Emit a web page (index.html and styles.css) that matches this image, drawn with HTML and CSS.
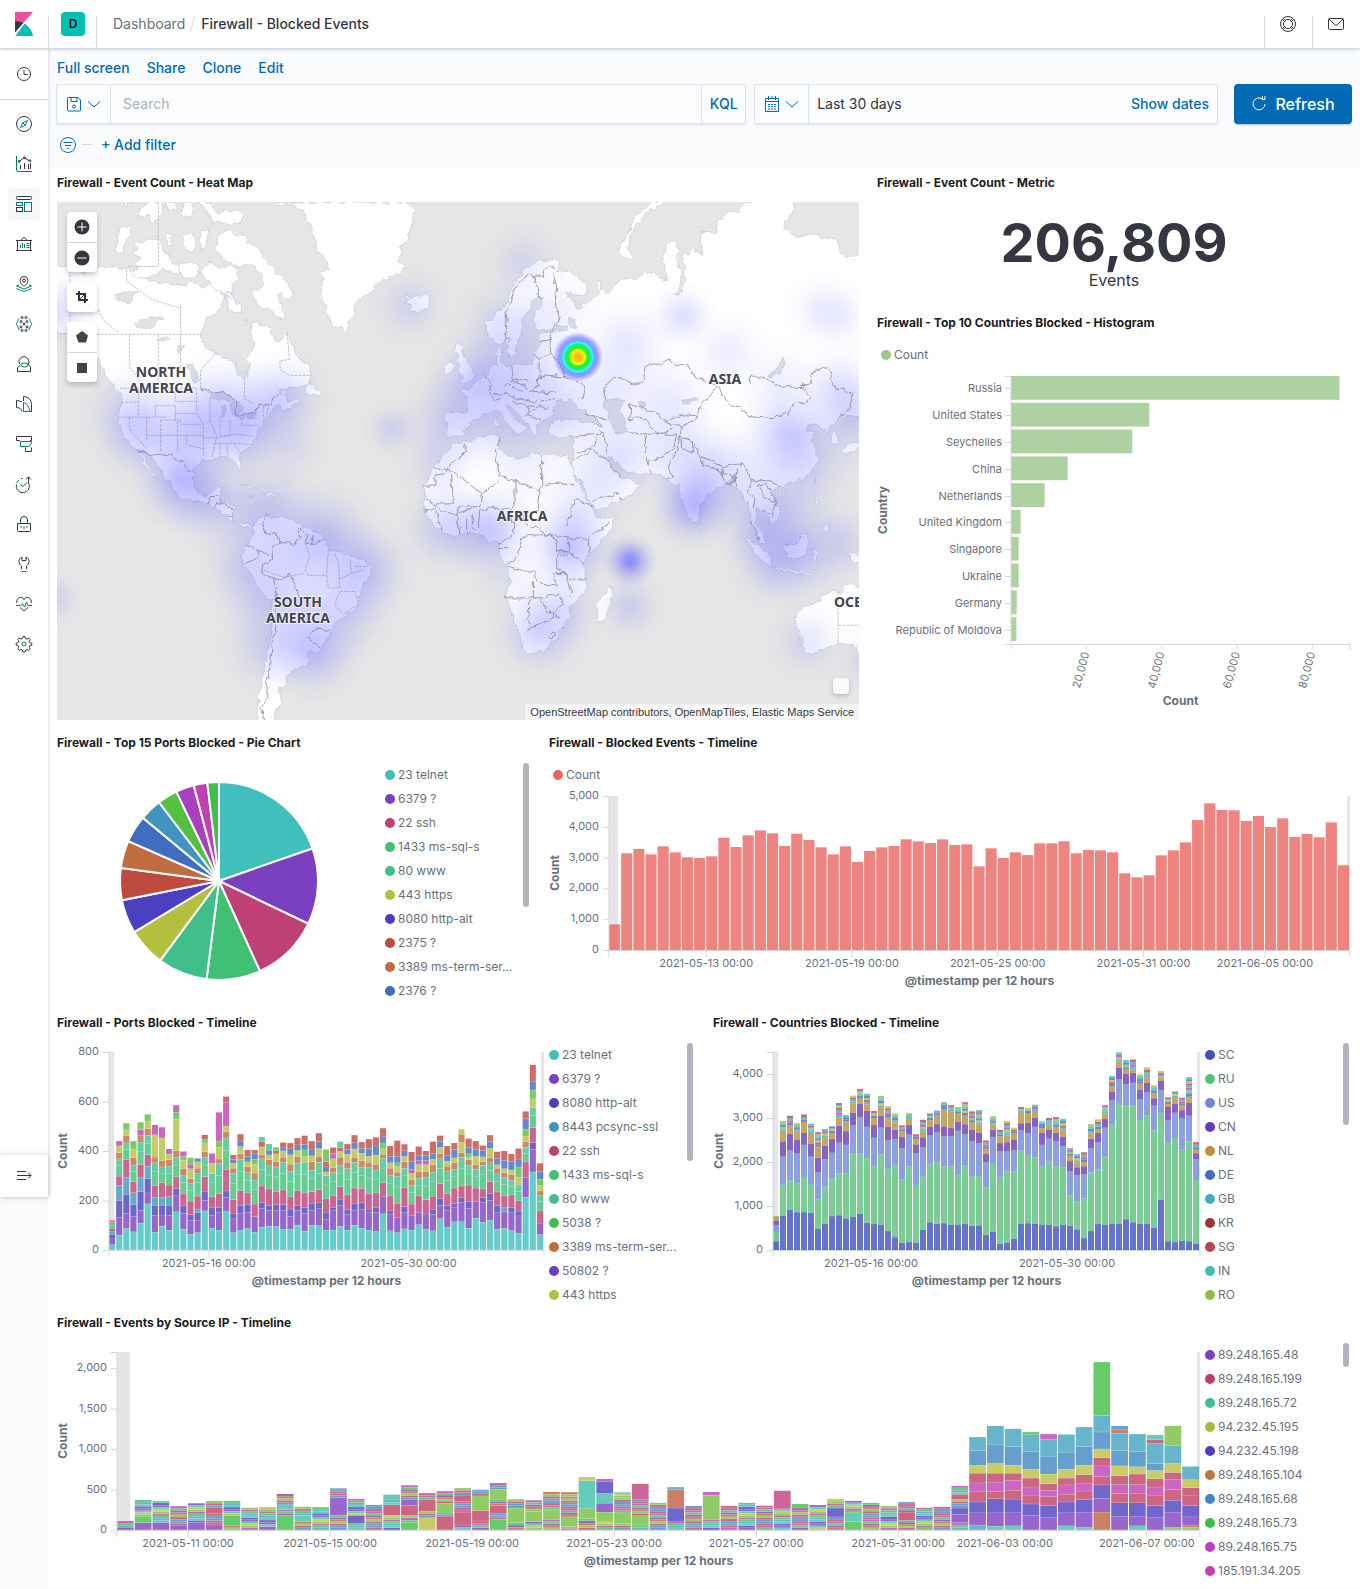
FILE: index.html
```html
<!DOCTYPE html>
<html lang="en">
<head>
    <meta charset="UTF-8">
    <meta name="viewport" content="width=device-width, initial-scale=1.0">
    <title>Firewall - Blocked Events</title>
    <link rel="stylesheet" href="styles.css">
</head>
<body>

<header class="header">
    <a class="header-logo" href="#" aria-label="Home">
        <svg width="24" height="24" viewBox="0 0 24 24">
            <path fill="#f04e98" d="M3 0v10.5L10.5 12 21 0z"/>
            <path fill="#343741" d="M3 9v11.5L11.3 11C8.900 9.700 6 9 3 9z"/>
            <path fill="#00bfb3" d="M12.600 11.500L3.400 24H21c-.9-5.100-4-9.600-8.400-12.500z"/>
        </svg>
    </a>
    <button class="header-space" aria-label="Default space"><span class="avatar">D</span></button>
    <nav class="breadcrumbs">
        <a href="#">Dashboard</a>
        <span class="slash"></span>
        <span class="current">Firewall - Blocked Events</span>
    </nav>
    <button class="header-icon" aria-label="Help">
        <svg width="16" height="16" viewBox="0 0 16 16" fill="none" stroke="#343741">
            <circle cx="8" cy="8" r="7.500"/><circle cx="8" cy="8" r="4.500"/>
            <path d="M2.500 3.500l2.300 2.300M3.500 2.500l2.300 2.300M13.500 3.500l-2.300 2.300M12.500 2.500l-2.300 2.300M2.500 12.500l2.300-2.300M3.500 13.500l2.300-2.300M13.500 12.500l-2.300-2.300M12.500 13.500l-2.300-2.300"/>
        </svg>
    </button>
    <button class="header-icon" aria-label="News">
        <svg width="16" height="16" viewBox="0 0 16 16" fill="none" stroke="#343741">
            <rect x=".5" y="2.500" width="15" height="11" rx="1"/><path d="M1 3l5.800 5.800a1.700 1.700 0 0 0 2.400 0L15 3"/>
        </svg>
    </button>
</header>

<div class="layout">
    <nav class="side">
        <a class="recent" href="#" aria-label="Recently viewed">
            <svg viewBox="0 0 16 16"><circle cx="8" cy="8" r="6.500"/><path d="M8 4v4.500h3.500"/></svg>
        </a>
        <div class="side-links">
            <a href="#" aria-label="Discover"><svg viewBox="0 0 16 16"><circle cx="8" cy="8" r="7.500"/><path class="t" d="M11.500 4.500L9.300 9.300l-4.800 2.200 2.200-4.800zM6.700 6.700l2.600 2.600"/></svg></a>
            <a href="#" aria-label="Visualize"><svg viewBox="0 0 16 16"><path class="t" d="M.5 0v14a1.500 1.500 0 0 0 1.500 1.500h14"/><path d="M4.500 13V9M8.500 13V7M12.500 13V8M3 5.500l5-3.700 5.500 3M14.500 13V7"/><circle cx="3" cy="5.500" r="1"/><circle cx="8.500" cy="1.700" r="1"/><circle cx="14" cy="4.800" r="1"/></svg></a>
            <a class="active" href="#" aria-label="Dashboard"><svg viewBox="0 0 16 16"><rect x=".5" y=".5" width="15" height="3" rx="1"/><rect class="t" x=".5" y="6.500" width="6" height="3"/><rect class="t" x="8.500" y="6.500" width="7" height="9"/><rect x=".5" y="11.500" width="6" height="4"/></svg></a>
            <a href="#" aria-label="Canvas"><svg viewBox="0 0 16 16"><path d="M0 4.500h16M1.500 4.500v9.500M14.500 4.500v9.500M0 14.500h16M4.500 4.500L8 1.500l3.500 3"/><path class="t" d="M4.500 12V9M6.500 12V7M8.500 12V8M10.500 7.500h3M10.500 9.500h3M10.500 11.500h3"/></svg></a>
            <a href="#" aria-label="Maps"><svg viewBox="0 0 16 16"><path d="M8 10.500C5.500 8 4 6.500 4 4.500a4 4 0 0 1 8 0c0 2-1.500 3.500-4 6z"/><circle cx="8" cy="4.500" r="1.500"/><path class="t" d="M3 9l-2.500 1L8 13l7.500-3L13 9M.5 12.500l7.500 3 7.500-3"/></svg></a>
            <a href="#" aria-label="Machine Learning"><svg viewBox="0 0 16 16"><circle cx="6" cy="1.500" r="1"/><circle cx="10" cy="1.500" r="1"/><circle cx="5" cy="5.500" r="1"/><circle cx="11" cy="5.500" r="1"/><circle cx="8" cy="8" r="1"/><circle cx="5" cy="11" r="1"/><circle cx="11" cy="11" r="1"/><circle cx="6" cy="14.500" r="1"/><circle cx="10" cy="14.500" r="1"/><path class="t" d="M3 2.500C1.500 4 2 5 1 6.500S.5 9 1.500 10s.5 3 2 4M13 2.500c1.500 1.500 1 2.500 2 4s.5 2.500-.5 3.500-.5 3-2 4"/></svg></a>
            <a href="#" aria-label="Metrics"><svg viewBox="0 0 16 16"><path d="M3.500 8A5 5 0 1 1 12 8.500l2.500 2v5h-13v-4L4 9.500"/><ellipse class="t" cx="8.500" cy="9" rx="3.500" ry="2"/></svg></a>
            <a href="#" aria-label="Logs"><svg viewBox="0 0 16 16"><path d="M7.500 5V.5c4.500 0 8 3.500 8 8v7H14M6 5.500L.5 4.500v7c3 0 5 1.500 5.500 4"/><path class="t" d="M7.500 15.500h6c0-4-2-7.500-6-9z"/></svg></a>
            <a href="#" aria-label="APM"><svg viewBox="0 0 16 16"><path d="M4 4.500H.5v-4h15v4H14M9.500 11.500v4h6v-4"/><path class="t" d="M4.500 5.500h11c0 3-1.500 5-4.500 5H4.500z"/></svg></a>
            <a href="#" aria-label="Uptime"><svg viewBox="0 0 16 16"><path class="t" d="M.7 7A6.500 6.500 0 0 1 7 2.500" stroke-dasharray="4 2"/><path d="M.5 8.500A6.500 6.500 0 1 0 12.500 7V1M10 3.500l2.500-2.700L15 3.500M4.500 8.500l2.500 2 4-4"/></svg></a>
            <a href="#" aria-label="SIEM"><svg viewBox="0 0 16 16"><path d="M4.500 6.500V4a3.500 3.500 0 0 1 7 0v2.500M1.500 7.500h13v7a1 1 0 0 1-1 1h-11a1 1 0 0 1-1-1z"/><path class="t" d="M5 10v2M8 10v3M11 10v2"/></svg></a>
            <a href="#" aria-label="Dev Tools"><svg viewBox="0 0 16 16"><path d="M6 1v3.500h4V1c2 1 3 2.500 3 4.500S12 9 10.500 10v3M6 1C4 2 3 3.500 3 5.500S4 9 5.500 10v3"/><path class="t" d="M5.500 15.500h5"/></svg></a>
            <a href="#" aria-label="Stack Monitoring"><svg viewBox="0 0 16 16"><path d="M1 7C0 4 2 1.500 4.500 1.500 6.500 1.500 8 3 8 4c0-1 1.500-2.500 3.500-2.500C14 1.500 16 4 15 7M4 11.500l4 3.500 4-3.500"/><path class="t" d="M0 9.500h5l1.500-2 2 3.500 2-5 1.500 3.500h4"/></svg></a>
            <a href="#" aria-label="Management"><svg viewBox="0 0 16 16"><path d="M6.500 2.500l.5-2h2l.5 2 1.500.6 1.700-1 1.500 1.500-1 1.700.6 1.500 2 .5v2l-2 .5-.6 1.500 1 1.700-1.500 1.500-1.700-1-1.500.6-.5 1.900H7l-.5-2-1.500-.6-1.700 1-1.500-1.500 1-1.700-.6-1.500-2-.5v-2l2-.5.6-1.500-1-1.700 1.500-1.500 1.700 1z"/><circle class="t" cx="8" cy="8" r="2"/></svg></a>
        </div>
        <button class="expand" aria-label="Expand side navigation">
            <svg viewBox="0 0 16 16"><path d="M1 3.500h9M1 7.500h14M1 11.500h9M12 4.500l3 3-3 3"/></svg>
        </button>
    </nav>

    <main class="main">
        <div class="toolbar">
            <div class="menu">
                <a href="#">Full screen</a>
                <a href="#">Share</a>
                <a href="#">Clone</a>
                <a href="#">Edit</a>
            </div>
            <form class="query" onsubmit="return false">
                <div class="search-box">
                    <button class="box-prepend saved" type="button" aria-label="Saved queries">
                        <svg width="16" height="16" viewBox="0 0 16 16"><path d="M1.500 2.500a1 1 0 0 1 1-1h9.500l2.500 2.500v10a1 1 0 0 1-1 1h-11a1 1 0 0 1-1-1zM5 1.500v4h6v-4"/><circle cx="8" cy="10.500" r="1.500"/></svg>
                        <svg width="16" height="16" viewBox="0 0 16 16"><path d="M2 5.500l6 5.500 6-5.500"/></svg>
                    </button>
                    <input class="search" type="text" placeholder="Search" aria-label="Search">
                    <button class="kql" type="button">KQL</button>
                </div>
                <div class="date-box">
                    <button class="box-prepend" type="button" aria-label="Date quick select">
                        <svg width="16" height="16" viewBox="0 0 16 16"><path d="M1.500 2.500h13v13h-13zM1.500 5.500h13M4.500 0v4M8 0v3M11.500 0v4"/><path d="M4 8.500h8M4 10.700h8M4 13h8" stroke-dasharray="2 1"/></svg>
                        <svg width="16" height="16" viewBox="0 0 16 16"><path d="M2 5.500l6 5.500 6-5.500"/></svg>
                    </button>
                    <button class="date-value" type="button">Last 30 days</button>
                    <button class="show-dates" type="button">Show dates</button>
                </div>
                <button class="refresh" type="submit">
                    <svg width="16" height="16" viewBox="0 0 16 16"><path d="M11.500 3A6 6 0 1 0 14 8M11.500 0v3.500H14V0"/></svg>
                    Refresh
                </button>
            </form>
            <div class="filters">
                <button class="filter-menu" aria-label="Filter options">
                    <svg width="16" height="16" viewBox="0 0 16 16"><circle cx="8" cy="8" r="7.500"/><path d="M3.500 5.500h9M5 8.500h6M7 11.500h2"/></svg>
                </button>
                <span class="filter-dash"></span>
                <button class="add-filter">+ Add filter</button>
            </div>
        </div>

        <div class="dashboard">
            <section class="panel panel-map">
                <h2>Firewall - Event Count - Heat Map</h2>
                <div class="map">
                    <svg class="map-canvas" viewBox="0 0 802 518" preserveAspectRatio="xMidYMid slice">
                        <defs>
                            <radialGradient id="blob">
                                <stop offset="0" stop-color="#6464ff" stop-opacity=".7"/>
                                <stop offset=".2" stop-color="#6464ff" stop-opacity=".6"/>
                                <stop offset=".5" stop-color="#6464ff" stop-opacity=".3"/>
                                <stop offset=".75" stop-color="#6464ff" stop-opacity=".1"/>
                                <stop offset="1" stop-color="#6464ff" stop-opacity="0"/>
                            </radialGradient>
                            <radialGradient id="hot">
                                <stop offset="0" stop-color="#ffa51e"/>
                                <stop offset=".16" stop-color="#ffc81e"/>
                                <stop offset=".28" stop-color="#e6ff14"/>
                                <stop offset=".38" stop-color="#28f028"/>
                                <stop offset=".5" stop-color="#14f078"/>
                                <stop offset=".58" stop-color="#3cf5ff"/>
                                <stop offset=".66" stop-color="#5aa0ff" stop-opacity=".9"/>
                                <stop offset=".78" stop-color="#6464ff" stop-opacity=".6"/>
                                <stop offset="1" stop-color="#6464ff" stop-opacity="0"/>
                            </radialGradient>
                            <!-- breaks up long straight coast segments -->
                            <filter id="coast" x="0" y="0" width="1" height="1">
                                <feTurbulence type="fractalNoise" baseFrequency=".045" numOctaves="2" seed="4"/>
                                <feDisplacementMap in="SourceGraphic" scale="20" xChannelSelector="R" yChannelSelector="G"/>
                            </filter>
                        </defs>
                        <g transform="translate(-7 -32) scale(.33333 .35714)">
                            <g class="land" filter="url(#coast)">
                                <path d="M0 270L21 270 30 274 40 270 50 275 55 268 75 278 100 290 125 276 140 275 150 268 160 272 190 275 200 268 215 276 230 278 260 290 285 300 300 312 315 308 330 320 350 316 370 322 410 318 425 312 440 322 455 328 470 325 490 318 510 340 530 345 525 360 510 385 490 405 465 420 455 450 455 475 470 505 500 512 530 525 555 540 560 565 578 583 592 580 598 550 590 530 600 515 612 500 610 470 600 450 605 425 620 422 635 432 650 435 665 450 672 478 690 483 700 465 712 458 720 480 735 510 760 540 785 555 785 575 770 600 745 610 710 612 690 620 665 637 690 625 712 612 705 630 712 645 745 640 748 650 720 665 700 672 690 655 668 668 655 685 640 700 632 720 620 735 615 750 605 770 580 790 565 803 570 825 577 848 568 845 555 820 550 808 530 806 500 810 480 812 455 815 440 830 430 850 432 880 445 905 470 913 492 900 500 888 520 888 512 910 508 930 530 935 552 940 550 965 553 985 570 992 590 988 606 995 600 1003 580 1000 560 995 540 975 510 955 480 940 460 930 430 928 395 915 370 898 360 880 345 855 320 825 300 795 275 787 285 810 300 840 325 870 300 850 280 820 265 787 235 765 215 735 207 710 208 680 213 650 210 622 185 600 170 580 150 540 140 520 100 480 60 455 0 455z"/>
                                <path d="M205 157L222 162 240 160 242 180 225 205 220 230 195 225 205 190z"/>
                                <path d="M250 195L275 205 300 190 325 195 340 225 355 235 365 260 400 272 400 290 370 290 340 280 325 290 300 300 270 305 235 285 265 275 250 255 275 245 245 235 262 220z"/>
                                <path d="M220 90L245 90 230 103zM265 130L275 105 290 90 335 90 340 105 330 125 310 150 300 140 295 125zM345 90L370 90 380 110 360 120zM395 90L425 90 430 110 420 135 400 130zM440 90L480 90 490 105 500 120 530 112 560 115 578 125 578 145 540 152 505 150 490 145 465 110z"/>
                                <path d="M350 175L372 180 365 195 370 215 352 210zM395 185L430 175 435 200 425 235 405 215zM450 175L480 165 475 195 455 225 448 200zM380 265L420 258 450 270 440 300 400 300z"/>
                                <path d="M500 185L520 175 540 165 550 182 565 190 575 178 600 195 590 205 625 215 640 245 665 270 680 290 700 300 715 320 730 345 715 365 695 345 680 355 690 370 695 385 710 420 690 418 675 400 660 390 640 385 620 375 605 340 625 335 640 320 630 290 600 265 560 268 540 262 520 250 500 225z"/>
                                <path d="M530 345L545 350 555 372 570 375 578 398 550 400 535 390zM450 290L480 255 510 275 540 270 560 275 568 300 550 320 540 360 525 345 490 330zM580 420L592 422 588 430z"/>
                                <path d="M675 90L690 100 720 96 745 100 760 115 770 125 768 140 785 160 800 210 798 235 820 240 830 250 835 275 808 285 820 300 812 350 830 395 850 440 870 440 892 455 900 420 915 400 918 365 955 350 990 310 1040 295 1070 270 1040 262 1060 235 1050 210 1075 200 1070 185 1090 150 1085 130 1095 110 1085 90z"/>
                                <path d="M785 575L778 600 790 605 810 620 808 635 790 628 765 628 770 605z"/>
                                <path d="M1060 350L1075 348 1080 358 1105 355 1120 348 1135 345 1142 370 1130 388 1105 398 1075 390 1085 380 1065 368 1078 362z"/>
                                <path d="M1185 545L1205 535 1212 550 1200 570 1185 575zM1218 485L1240 490 1235 510 1250 530 1255 550 1275 570 1270 590 1235 595 1225 600 1240 580 1225 575 1230 555 1220 540 1222 515 1215 505z"/>
                                <path d="M568 878L600 882 625 895 600 892zM645 905L670 902 676 912 650 914zM596 914h12v3h-10z"/>
                                <path d="M606 995L625 975 650 965 660 975 690 972 735 980 760 1000 800 1015 825 1035 835 1065 880 1070 920 1085 950 1095 965 1115 960 1135 935 1165 930 1200 915 1235 880 1250 850 1270 845 1295 820 1325 805 1350 770 1350 768 1358 778 1370 772 1390 735 1395 730 1410 705 1420 710 1440 690 1450 690 1470 700 1490 680 1510 672 1550 625 1550 620 1500 632 1450 640 1410 655 1340 665 1280 668 1240 665 1205 630 1180 610 1150 590 1115 575 1100 580 1070 600 1040 608 1015z"/>
                                <path class="lake" d="M482 630L510 620 545 635 555 648 525 645 490 640zM515 660L530 655 525 690 513 695zM540 655L565 650 582 665 560 690 545 680zM565 695L620 678 622 685 570 700zM410 545L430 550 448 590 435 598zM250 430L275 422 300 408 310 415 338 412 320 430 300 445 260 440zM195 352L240 340 265 338 240 372 215 370zM320 478L340 468 358 472 345 480zM388 490L402 492 390 515z"/>
                            </g>
                            <path class="border dashed" d="M60 270V455M140 460H455M238 460V550L285 611M325 460V611M392 380V560M230 278V310L300 360 392 388M145 390L160 420 205 455M210 611H440M452 611V560L500 510M583 583V640L610 655M325 90V270H232M712 458L718 530 690 535 690 560 720 575H785M213 650H265M265 611V690M208 692H350M238 692V725L290 780M290 692V760M316 660H376V704M316 660V692M376 611V648H440M376 682H440M332 700V790M290 743H455M383 704V790M332 700H392V712H455M410 743V770L460 780M440 611V680L460 712V800M480 640V700L470 710M480 700L500 745 485 805M510 700V745L545 740M540 700V735M460 750H500L560 740 610 745M490 765H560L610 770M510 765V805M530 765L535 805M550 765L575 795M575 695V715H630M577 695H620M640 660V695M655 655L650 690M765 1045L780 1080 765 1120 775 1135H830L835 1060M830 1135L835 1170H870L865 1100 855 1075M870 1145L905 1130 900 1090M905 1130L935 1120M915 1110H955M860 1200L870 1180 915 1180 925 1215 880 1245 855 1220zM640 1120L700 1140 760 1130"/>
                            <path class="border" filter="url(#coast)" d="M452 611L480 622 520 625 555 645 560 690 620 680 625 660 665 658 668 637M265 787L310 797 345 795 365 800 385 820 400 815 415 840 432 848M475 935L480 915 508 912M492 945L500 930 550 950M530 965L552 968M650 967L635 990 645 1015 685 1020 690 1045 665 1055 668 1090 640 1100 635 1120 640 1135 670 1142 700 1145 715 1135 745 1170 748 1200M590 1055L625 1065 620 1085 590 1100H578M625 1065L665 1080M742 1000L750 1030 730 1050 715 1040 690 1045M750 1000L775 1020 765 1045 800 1045 825 1035M790 1020L785 1045M670 1142L678 1180 668 1205M678 1180L682 1230 676 1290 666 1330 662 1390 652 1430 650 1480 636 1505 642 1550M775 1310L810 1335M775 1310L790 1285 840 1290"/>
                        </g>
                        <g transform="translate(403 -32) scale(.33333 .35714)">
                            <g class="land" filter="url(#coast)">
                                <path d="M245 250L285 250 300 262 290 280 330 285 370 310 382 335 375 350 345 348 320 340 335 365 350 370 345 385 365 390 360 375 375 375 400 360 415 345 410 305 425 320 420 335 445 340 460 320 500 300 530 308 550 285 575 285 600 305 622 310 605 250 620 210 640 195 655 210 650 250 665 290 660 330 640 348 660 345 678 315 670 260 665 235 690 235 700 215 725 240 725 175 770 175 775 145 800 120 830 115 860 95 880 80 1000 80 1005 110 965 160 1010 185 1060 180 1090 190 1130 190 1140 230 1160 245 1220 230 1220 690 1180 690 1160 690 1140 700 1115 715 1110 735 1130 730 1135 760 1120 768 1112 740 1095 730 1080 722 1075 710 1040 715 1035 730 1065 732 1050 755 1070 785 1072 820 1050 850 1010 872 970 880 960 890 930 900 940 920 960 945 962 970 935 990 925 975 905 955 890 945 885 990 905 1015 920 1045 900 1050 885 1020 870 985 865 930 850 930 845 905 825 890 815 870 785 880 770 895 740 915 720 940 715 985 698 993 680 960 662 915 655 880 640 885 620 865 600 850 560 852 515 848 505 862 540 880 520 905 480 925 410 955 400 945 375 895 345 850 320 812 335 825 345 800 340 770 345 745 310 750 280 745 265 730 270 705 320 697 375 705 412 710 400 690 372 672 350 670 345 655 330 640 310 650 290 645 275 680 265 700 240 705 225 715 235 740 215 740 205 715 190 700 165 675 145 655 140 665 165 695 205 725 190 725 175 745 165 735 130 690 110 670 85 680 60 690 40 700 20 720 10 745 -30 745 -40 735 -45 680 20 680 25 650 0 615 30 610 45 595 75 575 85 565 100 545 115 545 105 520 115 495 125 510 120 540 150 548 200 540 220 545 218 515 240 490 235 460 280 455 300 440 260 450 230 450 220 430 225 400 245 380 250 360 235 355 215 370 210 395 185 420 185 450 165 520 150 525 135 480 115 485 85 470 80 430 110 395 140 370 160 320 190 280 225 260z"/>
                                <path d="M620 85L580 90 545 115 515 140 512 165 495 185 475 225 490 245 520 250 505 220 510 190 530 150 570 115z"/>
                                <path d="M17 760L60 748 100 742 120 750 115 780 150 800 165 810 195 805 215 790 250 795 320 800 345 850 365 895 400 950 410 972 440 975 467 972 455 1000 430 1035 385 1075 370 1100 378 1145 375 1185 330 1220 332 1255 310 1275 290 1315 250 1350 200 1353 190 1340 180 1300 155 1240 135 1195 155 1150 135 1100 115 1075 115 1040 90 1045 60 1018 0 1020 -30 1025 -75 1000 -100 965 -112 940 -105 900 -112 885 -80 835 -45 790 -20 765z"/>
                                <path d="M455 1165L460 1185 435 1265 415 1265 410 1225 425 1190zM720 985L728 1000 720 1010zM850 1018L870 1035 935 1085 935 1110 900 1090zM935 1110L1060 1130V1137L1000 1130 940 1120zM970 1050L1005 1040 1040 1010 1045 1045 1030 1085 980 1085zM1058 1065L1078 1060 1070 1080 1075 1105 1055 1090zM1065 910L1078 935 1068 940zM1090 1000L1108 988 1105 1012zM1160 1070L1200 1080V1105L1175 1095zM1062 870L1068 855 1066 885zM965 900H975L970 910zM1145 785L1165 770 1200 760V775L1160 795zM105 690H114V720H105zM155 735L175 738 172 748zM1090 1135L1110 1132 1095 1140z"/>
                                <path d="M1005 1245L1025 1225 1075 1210 1085 1190 1110 1180 1125 1180 1140 1185 1160 1160 1220 1165V1375L1180 1330 1135 1325 1090 1340 1070 1352 1030 1355 1025 1310 1008 1275z"/>
                                <path class="lake" d="M440 645L480 638 495 650 475 670 498 700 495 740 465 735 450 700 432 665zM535 645L555 655 545 670zM665 645L715 640 690 655 670 655zM970 525L975 545 950 575 920 580 950 560zM325 415L340 415 350 440 330 440zM290 435L315 435 320 455 295 455zM442 805L465 815 500 845 515 848 505 862 480 865 460 840zM135 475L155 475 150 485zM298 1065H325V1082H298z"/>
                            </g>
                            <path class="border dashed" d="M1134 1180V1325M1134 1275H1200"/>
                            <g filter="url(#coast)">
                                <path class="border" d="M135 480L140 440 135 400 150 370 165 330 185 310 210 290 220 300 250 300 255 275 270 268 290 280M280 290L290 330 285 370 300 420 275 450M215 290L235 330 240 365M240 475L270 475M270 455L272 515 305 545 310 580 345 590 375 605 370 640M220 515L240 525 272 515M235 580L270 575 310 580M155 548L160 590 215 615 235 605 238 540M75 575L95 600 90 630 105 645 125 640M100 630L140 625 170 640 225 650 285 640M140 600L175 615 225 620 285 625M135 600L160 585 200 590M160 650L200 660 210 690 240 700M200 660L265 665M195 690L230 670M432 610L460 580 500 590 520 605 550 592 555 550 600 545 620 530 650 545 680 545 710 585 740 592 775 605 735 645 720 660 715 690 680 685 650 690 620 705 600 690 550 665 512 655 510 700M432 610L440 645M510 700L540 690 600 740 640 725M610 705L660 720M775 605L805 655 840 665 860 690 930 695 990 680 1000 660 1055 640 1020 605 1040 600 1030 610 960 605 910 580 870 580 875 600M1020 605L1050 600 1060 560 1090 552 1110 565 1125 610 1180 625 1165 675 1115 710M715 690L660 720 665 780 700 790 700 760 720 805 790 830 850 820 875 870 930 870 960 885M700 760L660 745 650 790 625 830 640 860 620 865M720 805L730 825 790 850 790 835M785 835L790 875 820 880 825 855 790 850M850 820L820 860 830 890M875 870L865 900 885 920 880 950M895 885L910 915 945 930 935 970 905 950M895 885L920 880 950 940M870 985L900 1040M420 725L440 780 435 805M500 735L555 740 560 810 570 850M555 740L610 740 650 740 640 780 580 815 560 810M345 745L420 740M340 815L370 800 400 770 420 740M350 790L380 780 440 810 480 860M400 925L480 905 485 925M375 680L440 700M400 690L430 720 410 715M975 1050L1005 1050 1030 1025"/>
                                <path class="border" d="M245 795V880H345M120 750L105 780 118 860 165 870 240 900 245 880M165 870L165 925 150 950M118 870L65 905 -45 830M65 905L60 940 0 940 -10 965M-80 835H-40V850L-75 855V885H-112M-25 855L-20 935H-75L-105 925M240 900L235 950 180 980 155 990 150 950 60 950 55 1000M165 985L160 1020 115 1045M180 980L260 1020 325 1030 380 1030 445 990M345 920L320 1000M400 945L350 920M195 1025L260 1020 290 1035M195 1025L160 1100H140M140 1108L180 1120 220 1120 235 1155 290 1165 280 1130 320 1130M290 1035V1120L320 1130M290 1070L320 1065 370 1100M325 1030V1065M385 1030V1075M135 1198H240L300 1185M210 1205L205 1290M205 1280L260 1265 310 1215 300 1190M240 1200L265 1240 300 1250M330 1145H378M220 1150V1200M320 1130L335 1180 330 1195M-110 955L-75 950 -60 985 -50 1010M-75 935L-55 955 -10 965 0 1020M20 975V1020M40 965V1010M-10 965L55 940M115 1060H150M17 765L20 790 -40 830M310 1275L300 1285"/>
                                <circle class="border" cx="275" cy="1305" r="8"/>
                            </g>
                        </g>
                        <g id="heat"></g>
                        <circle cx="521" cy="155" r="25" fill="url(#hot)"/>
                        <g class="map-labels">
                            <text x="104" y="175">NORTH</text>
                            <text x="104" y="191">AMERICA</text>
                            <text x="241" y="405">SOUTH</text>
                            <text x="241" y="421">AMERICA</text>
                            <text x="465" y="319">AFRICA</text>
                            <text x="668" y="182">ASIA</text>
                            <text x="809" y="405">OCEANIA</text>
                        </g>
                    </svg>
                    <div class="map-tools">
                        <div class="tool-group">
                            <button aria-label="Zoom in"><svg width="16" height="16" viewBox="0 0 16 16"><circle cx="8" cy="8" r="7.500" fill="#343741"/><path d="M3.500 8h9M8 3.500v9" stroke="#fff"/></svg></button>
                            <button aria-label="Zoom out"><svg width="16" height="16" viewBox="0 0 16 16"><circle cx="8" cy="8" r="7.500" fill="#343741"/><path d="M3.500 8h9" stroke="#fff"/></svg></button>
                        </div>
                        <div class="tool-group">
                            <button aria-label="Fit to data"><svg width="12" height="12" viewBox="0 0 12 12" fill="none" stroke="#343741" stroke-width="2"><path d="M3 0v9h9M0 3h9v9"/><path d="M4 8l4-4" stroke-width="1"/></svg></button>
                        </div>
                        <div class="tool-group">
                            <button aria-label="Draw polygon"><svg width="12" height="12" viewBox="0 0 12 12"><path d="M6 0l6 4.500L10 11.500H2.500L0 4.500z" fill="#444"/></svg></button>
                            <button aria-label="Draw rectangle"><svg width="12" height="12" viewBox="0 0 12 12"><path d="M1 1h10v10H1z" fill="#444"/></svg></button>
                        </div>
                    </div>
                    <button class="map-legend-toggle" aria-label="Expand legend"></button>
                    <div class="attribution"><a href="#">OpenStreetMap contributors</a>, <a href="#">OpenMapTiles</a>, <a href="#">Elastic Maps Service</a></div>
                </div>
            </section>

            <section class="panel panel-metric">
                <h2>Firewall - Event Count - Metric</h2>
                <div class="metric">
                    <div class="metric-value">206,809</div>
                    <div class="metric-label">Events</div>
                </div>
            </section>

            <section class="panel panel-histogram">
                <h2>Firewall - Top 10 Countries Blocked - Histogram</h2>
                <ul class="legend legend-top" data-legend="countries"></ul>
                <div class="chart" id="histogram"></div>
            </section>

            <section class="panel panel-pie">
                <h2>Firewall - Top 15 Ports Blocked - Pie Chart</h2>
                <div class="with-legend">
                    <div class="chart" id="pie"></div>
                    <ul class="legend" data-legend="pie"></ul>
                    <div class="scroll-thumb thumb-pie"></div>
                </div>
            </section>

            <section class="panel panel-events">
                <h2>Firewall - Blocked Events - Timeline</h2>
                <ul class="legend legend-top" data-legend="events"></ul>
                <div class="chart" id="events"></div>
            </section>

            <section class="panel panel-half">
                <h2>Firewall - Ports Blocked - Timeline</h2>
                <div class="with-legend">
                    <div class="chart" id="ports"></div>
                    <ul class="legend" data-legend="ports"></ul>
                    <div class="scroll-thumb thumb-ports"></div>
                </div>
            </section>

            <section class="panel panel-half">
                <h2>Firewall - Countries Blocked - Timeline</h2>
                <div class="with-legend">
                    <div class="chart" id="countries"></div>
                    <ul class="legend" data-legend="codes"></ul>
                    <div class="scroll-thumb thumb-countries"></div>
                </div>
            </section>

            <section class="panel panel-full">
                <h2>Firewall - Events by Source IP - Timeline</h2>
                <div class="with-legend">
                    <div class="chart" id="sources"></div>
                    <ul class="legend" data-legend="sources"></ul>
                    <div class="scroll-thumb thumb-sources"></div>
                </div>
            </section>
        </div>
    </main>
</div>

<script src="script.js"></script>
</body>
</html>
```
FILE: styles.css
```css
* {
    box-sizing: border-box;
}

body {
    margin: 0;
    font-family: Inter, "Liberation Sans", sans-serif;
    font-size: 14px;
    color: #343741;
    background: #fafbfd;
}

a {
    color: #006bb4;
    text-decoration: none;
}

button {
    margin: 0;
    padding: 0;
    border: none;
    background: none;
    font-family: inherit;
    font-size: 14px;
    color: inherit;
    cursor: pointer;
}

svg {
    display: block;
}

/* header */

.header {
    position: relative;
    z-index: 2;
    display: flex;
    height: 49px;
    background: #fff;
    border-bottom: 1px solid #d3dae6;
    box-shadow: 0 2px 2px -1px rgba(152, 162, 179, 0.3), 0 1px 5px -2px rgba(152, 162, 179, 0.3);
}

.header-logo,
.header-space,
.header-icon {
    position: relative;
    display: flex;
    align-items: center;
    justify-content: center;
    width: 48px;
    height: 48px;
}

.header-space {
    padding-left: 2px;
}

.header-space::before,
.header-space::after,
.header-icon::before {
    content: "";
    position: absolute;
    top: 16px;
    bottom: 0;
    left: 0;
    width: 1px;
    background: #d3dae6;
}

.header-space::after {
    left: 48px;
}

.avatar {
    width: 24px;
    height: 24px;
    border-radius: 4px;
    background: #00bfb3;
    color: #000;
    font-size: 12px;
    font-weight: 500;
    line-height: 24px;
}

.breadcrumbs {
    flex: 1;
    display: flex;
    align-items: center;
    height: 47px;
    padding-left: 17px;
}

.breadcrumbs a {
    color: #69707d;
}

.breadcrumbs .slash {
    width: 1px;
    height: 16px;
    margin: 0 8px 0 7px;
    background: #d3dae6;
    transform: rotate(15deg);
}

.breadcrumbs .current {
    font-weight: 500;
}

/* side navigation */

.layout {
    display: flex;
    align-items: flex-start;
}

.side {
    position: relative;
    z-index: 1;
    display: flex;
    flex-direction: column;
    flex: 0 0 48px;
    height: calc(100vh - 441px);
    background: #fff;
    box-shadow: 1px 0 3px rgba(152, 162, 179, 0.35);
}

.side svg {
    width: 16px;
    height: 16px;
    fill: none;
    stroke: #343741;
    overflow: visible;
}

.side .t {
    stroke: #017d73;
}

.side a {
    display: flex;
    align-items: center;
    justify-content: center;
    height: 32px;
    border-radius: 4px;
}

.side .recent {
    height: 51px;
    border-bottom: 1px solid #d3dae6;
    border-radius: 0;
}

.side-links {
    flex: 1;
    display: flex;
    flex-direction: column;
    gap: 8px;
    padding: 8px;
}

.side a.active {
    background: #f5f7fa;
}

.expand {
    display: flex;
    align-items: center;
    justify-content: center;
    height: 42px;
    background: #fff;
    box-shadow: 0 0 6px rgba(152, 162, 179, 0.5);
}

.main {
    flex: 1;
    min-width: 0;
}

/* query bar */

.toolbar {
    padding: 8px;
    height: 119px;
}

.menu {
    display: flex;
    gap: 17px;
    padding-left: 1px;
    line-height: 22px;
    font-weight: 500;
}

.query {
    display: flex;
    gap: 8px;
    padding-top: 5px;
}

.search-box,
.date-box {
    display: flex;
    height: 40px;
    background: #fbfcfd;
    border: 1px solid #e0e4ee;
    box-shadow: 0 2px 2px -1px rgba(152, 162, 179, 0.3);
}

.search-box {
    flex: 149 1 0;
}

.date-box {
    flex: 100 1 0;
}

.toolbar svg {
    fill: none;
    stroke: #006bb4;
}

.box-prepend {
    display: flex;
    align-items: center;
    justify-content: center;
    gap: 4px;
    width: 54px;
    border-right: 1px solid #e0e4ee;
}

.search {
    flex: 1;
    min-width: 0;
    padding: 0 12px 2px;
    border: none;
    background: none;
    font-family: inherit;
    font-size: 14px;
    color: #343741;
}

.search::placeholder {
    color: #abb0ba;
}

.kql {
    width: 44px;
    padding-bottom: 2px;
    border-left: 1px solid #e0e4ee;
    color: #006bb4;
    font-weight: 500;
}

.date-value {
    flex: 1;
    padding: 0 0 2px 8px;
    text-align: left;
}

.show-dates {
    padding: 0 8px 2px;
    color: #006bb4;
    font-weight: 500;
}

.refresh {
    display: flex;
    align-items: center;
    justify-content: center;
    gap: 8px;
    width: 118px;
    height: 40px;
    margin-left: 8px;
    border-radius: 4px;
    background: #006bb4;
    box-shadow: 0 2px 2px -1px rgba(54, 97, 126, 0.4);
    color: #fff;
    font-size: 16px;
    font-weight: 500;
}

.refresh svg {
    stroke: #fff;
}

.filters {
    display: flex;
    align-items: center;
    padding: 12px 4px;
    line-height: 16px;
}

.filter-dash {
    width: 10px;
    height: 1px;
    margin: 0 9px 0 6px;
    background: #d3dae6;
}

.add-filter {
    color: #006bb4;
    font-weight: 500;
}

/* dashboard */

.dashboard {
    display: grid;
    grid-template-columns: repeat(8, 1fr);
    grid-template-rows: 132px 412px 272px 292px 272px;
    gap: 8px;
    padding: 4px;
    background: #fff;
}

.panel {
    display: flex;
    flex-direction: column;
    min-width: 0;
    min-height: 0;
    padding: 0 5px 4px;
}

.panel h2 {
    flex: 0 0 22px;
    margin: 0 0 8px;
    font-size: 12px;
    font-weight: 700;
    line-height: 22px;
    color: #1a1c21;
}

.panel-map {
    grid-column: span 5;
    grid-row: span 2;
}

.panel-metric,
.panel-histogram,
.panel-pie {
    grid-column: span 3;
}

.panel-events {
    grid-column: span 5;
}

.panel-half {
    grid-column: span 4;
}

.panel-full {
    grid-column: 1 / -1;
}

/* map */

.map {
    position: relative;
    flex: 1;
    min-height: 0;
    overflow: hidden;
    background: #e6e6e6;
}

.map-canvas {
    width: 100%;
    height: 100%;
}

.land path {
    fill: #fff;
    stroke: #cdd6e1;
    vector-effect: non-scaling-stroke;
}

.land .lake {
    fill: #e2e2e4;
}

.border {
    fill: none;
    stroke: #a0a0aa;
    stroke-width: 1px;
    vector-effect: non-scaling-stroke;
}

.border.dashed {
    stroke: #c6c6cc;
    stroke-dasharray: 3 1;
}

.map-labels text {
    font-family: "Noto Sans", sans-serif;
    font-size: 14px;
    font-weight: 700;
    text-anchor: middle;
    fill: #444450;
    stroke: rgba(255, 255, 255, 0.7);
    stroke-width: 2px;
    paint-order: stroke;
}

.map-tools {
    position: absolute;
    top: 10px;
    left: 10px;
    display: flex;
    flex-direction: column;
    gap: 10px;
}

.tool-group {
    width: 30px;
    border-radius: 4px;
    background: #fff;
    box-shadow: 0 3px 5px rgba(65, 78, 101, 0.3);
}

.tool-group button {
    display: flex;
    align-items: center;
    justify-content: center;
    width: 30px;
    height: 30px;
}

.tool-group button + button {
    border-top: 1px solid #d3dae6;
}

.map-legend-toggle {
    position: absolute;
    right: 10px;
    bottom: 26px;
    width: 16px;
    height: 16px;
    border-radius: 4px;
    background: #fafafa;
    box-shadow: 0 2px 4px rgba(65, 78, 101, 0.3);
}

.attribution {
    position: absolute;
    right: 0;
    bottom: 0;
    padding: 0 5px;
    background: rgba(255, 255, 255, 0.5);
    font-family: "Liberation Sans", sans-serif;
    font-size: 11px;
    line-height: 16px;
}

.attribution a {
    color: #343741;
    background: rgba(255, 255, 255, 0.6);
}

/* metric */

.metric {
    flex: 1;
    display: flex;
    flex-direction: column;
    align-items: center;
    justify-content: center;
    padding-top: 4px;
}

.metric-value {
    font-size: 54px;
    font-weight: 700;
    line-height: 54px;
}

.metric-label {
    font-size: 16px;
    line-height: 20px;
}

/* charts and legends */

.with-legend {
    flex: 1;
    display: flex;
    min-height: 0;
}

.chart {
    flex: 1;
    min-width: 0;
    min-height: 0;
}

.chart svg {
    overflow: visible;
}

.legend {
    flex: 0 0 138px;
    margin: 0;
    padding: 1px 0 0;
    list-style: none;
    overflow: hidden;
    color: #69707d;
    font-size: 12px;
    line-height: 24px;
}

.legend-top {
    flex: 0 0 24px;
    padding-left: 4px;
}

.legend li {
    display: flex;
    align-items: center;
    gap: 3px;
    white-space: nowrap;
}

.legend .dot {
    width: 10px;
    height: 10px;
    border-radius: 50%;
}

.scroll-thumb {
    flex: 0 0 6px;
    align-self: flex-start;
    margin: 1px 2px 0 0;
    border-radius: 3px;
    background: #b1b5bd;
}

.thumb-pie {
    height: 144px;
}

.thumb-ports {
    height: 118px;
}

.thumb-countries {
    height: 82px;
}

.thumb-sources {
    height: 24px;
}

.chart text {
    font-size: 11px;
    fill: #69707d;
}

.chart .axis-title {
    font-size: 12px;
    font-weight: 700;
    text-anchor: middle;
}

.chart .end {
    text-anchor: end;
}

.chart .middle {
    text-anchor: middle;
}

.chart .axis {
    fill: none;
    stroke: #d5d7db;
}

.chart .partial {
    fill: #e5e5e5;
}

.chart .bar {
    fill-opacity: 0.8;
}

.chart .slice {
    stroke: #fff;
    stroke-width: 2px;
}
```
FILE: script.js
```js
const legends = {
    countries: [['Count', '#9cc88b']],
    events: [['Count', '#ea6560']],
    pie: [['23 telnet', '#40bfbc'], ['6379 ?', '#7b40bf'], ['22 ssh', '#bf4074'], ['1433 ms-sql-s', '#40bf75'],
        ['80 www', '#40bf8b'], ['443 https', '#b4bf40'], ['8080 http-alt', '#4b40bf'], ['2375 ?', '#bf4a40'],
        ['3389 ms-term-ser...', '#bf6c40'], ['2376 ?', '#406dbf']],
    ports: [['23 telnet', '#40bfbc'], ['6379 ?', '#7b40bf'], ['8080 http-alt', '#4b40bf'], ['8443 pcsync-ssl', '#4094bf'],
        ['22 ssh', '#bf4074'], ['1433 ms-sql-s', '#40bf75'], ['80 www', '#40bf8b'], ['5038 ?', '#40bf4b'],
        ['3389 ms-term-ser...', '#bf6c40'], ['50802 ?', '#6640bf'], ['443 https', '#b4bf40']],
    codes: [['SC', '#4050bf'], ['RU', '#57c17b'], ['US', '#6f87d8'], ['CN', '#663db8'], ['NL', '#bc8f3d'], ['DE', '#406fbf'],
        ['GB', '#40aebf'], ['KR', '#9e3533'], ['SG', '#bf404f'], ['IN', '#40bfae'], ['RO', '#8fbf40']],
    sources: [['89.248.165.48', '#8040bf'], ['89.248.165.199', '#bf4062'], ['89.248.165.72', '#40bf90'], ['94.232.45.195', '#a4bf40'],
        ['94.232.45.198', '#4e40bf'], ['89.248.165.104', '#bf7640'], ['89.248.165.68', '#4087bf'], ['89.248.165.73', '#40bf46'],
        ['89.248.165.75', '#b640bf'], ['185.191.34.205', '#bf40b4']]
};

document.querySelectorAll('[data-legend]').forEach(ul => {
    legends[ul.dataset.legend].forEach(([name, color]) => {
        ul.insertAdjacentHTML('beforeend', `<li><span class="dot" style="background:${color}"></span>${name}</li>`);
    });
});

// heat map points: x, y, radius, strength
const heat = [
    [136, 229, 58, .5], [125, 279, 52, .6], [76, 214, 56, .35], [193, 218, 60, .4], [226, 197, 52, .35], [160, 200, 56, .25],
    [86, 239, 50, .3], [180, 239, 48, .25], [236, 247, 40, .15], [335, 227, 32, .25], [353, 104, 44, .22], [156, 300, 52, .35],
    [210, 311, 58, .4], [266, 336, 60, .45], [193, 361, 56, .35], [306, 368, 54, .45], [286, 407, 56, .35], [240, 361, 58, .25],
    [256, 447, 54, .5], [213, 443, 54, .3], [206, 397, 52, .25], [240, 405, 54, .25], [-3, 397, 30, .25], [-5, 110, 44, .3],
    [466, 61, 44, .2], [446, 125, 54, .25], [423, 179, 58, .45], [453, 182, 56, .2], [396, 218, 56, .35], [486, 189, 56, .25],
    [470, 147, 56, .2], [503, 218, 56, .25], [450, 225, 54, .3], [563, 250, 58, .25], [570, 143, 54, .22], [550, 190, 55, .2],
    [626, 114, 36, .3], [763, 107, 40, .15], [783, 115, 40, .15], [670, 150, 46, .16], [723, 182, 50, .15], [783, 189, 50, .3],
    [733, 232, 54, .45], [753, 261, 58, .25], [636, 304, 46, .6], [650, 275, 60, .35], [620, 246, 54, .2], [703, 325, 50, .35],
    [743, 347, 60, .4], [716, 361, 50, .3], [723, 300, 60, .25], [610, 201, 58, .2], [573, 359, 28, 1], [573, 405, 38, .28],
    [513, 347, 50, .5], [433, 329, 52, .5], [390, 325, 52, .35], [520, 314, 54, .2], [483, 429, 52, .4], [506, 404, 48, .25],
    [540, 279, 54, .15], [470, 268, 50, .12], [750, 440, 44, .22], [383, 264, 46, .2], [796, 218, 50, .3], [786, 340, 46, .2],
    [500, 110, 50, .15], [455, 375, 44, .12], [810, 460, 36, .2], [690, 270, 60, .15]
];
document.getElementById('heat').innerHTML = heat.map(([x, y, r, a]) =>
    `<circle cx="${x}" cy="${y}" r="${r}" fill="url(#blob)" opacity="${a}"/>`).join('');

function svg(el, w, h, body) {
    el.innerHTML = `<svg width="${w}" height="${h}">${body}</svg>`;
}

function rect(x, y, w, h, fill) {
    return `<rect class="bar" x="${x}" y="${y}" width="${w}" height="${h}" fill="${fill}"/>`;
}

// bars: one array per time bucket, each with [color, cumulative value] pairs
function timeline(id, bars, o) {
    const el = document.getElementById(id);
    const w = el.clientWidth;
    const h = el.clientHeight;
    const left = o.left;
    const right = w - o.right;
    const top = 10;
    const bottom = h - 50;
    const step = (right - left) / bars.length;
    const y = v => bottom - v / o.max * (bottom - top);
    let s = `<rect class="partial" x="${left}" y="${top}" width="${step * 0.75}" height="${bottom - top}"/>`;
    s += `<rect class="partial" x="${right - 3}" y="${top}" width="3" height="${bottom - top}"/>`;

    bars.forEach((bar, i) => {
        let prev = 0;
        bar.forEach(([color, v]) => {
            s += rect(left + i * step, y(v), step - 1, Math.max(y(prev) - y(v) - o.seam, 0.5), color);
            prev = v;
        });
    });

    s += `<path class="axis" d="M${left - 6} ${top + .5}h6V${bottom + .5}M${left - 6} ${bottom + .5}H${right}M${left} ${bottom}v7M${right} ${bottom}v7"/>`;
    for (let v = 0; v <= o.max; v += o.tick) {
        s += `<path class="axis" d="M${left - 6} ${y(v) + .5}h6"/>`;
        s += `<text class="end" x="${left - 10}" y="${y(v) + 3}">${v.toLocaleString('en-US')}</text>`;
    }
    o.labels.forEach(([i, text]) => {
        const x = left + i * step;
        s += `<path class="axis" d="M${x} ${bottom}v7"/><text class="middle" x="${x}" y="${bottom + 17}">${text} 00:00</text>`;
    });
    s += `<text class="axis-title" x="${(left + right) / 2}" y="${bottom + 35}">@timestamp per 12 hours</text>`;
    s += `<text class="axis-title" transform="translate(10 ${(top + bottom) / 2}) rotate(-90)">Count</text>`;
    svg(el, w, h, s);
}

const events = [833, 3139, 3279, 3106, 3366, 3171, 3009, 2987, 3041, 3647, 3344, 3723, 3885, 3788, 3377, 3777, 3571, 3333, 3106, 3366,
    2857, 3214, 3333, 3377, 3593, 3528, 3474, 3593, 3409, 3431, 2716, 3301, 2987, 3171, 3084, 3463, 3463, 3528, 3139, 3247,
    3236, 3171, 2489, 2359, 2424, 3074, 3236, 3496, 4221, 4762, 4545, 4535, 4188, 4351, 3994, 4275, 3669, 3766, 3658, 4145, 2749];

// T telnet, P 6379, I http-alt, B 8443, S ssh, G ms-sql-s + www, O ms-term, Y https, L 5038, U 2376, M 81, R 2375
const portColors = {
    T: '#40bfbc', P: '#7b40bf', I: '#4b40bf', B: '#4094bf', S: '#bf4074', G: '#40bf75', W: '#40bf8b',
    O: '#bf6c40', Y: '#b4bf40', L: '#55bf40', U: '#406dbf', M: '#bf40b2', R: '#bf4a40'
};
const ports = `T22 P45 I62 B75 S85 G110 O115 R120
T60 P131 I200 B260 S298 G368 O392 Y420 M440
T87 P148 I222 B292 S365 G432 O462 Y485 L512
T73 P136 I182 B231 S276 G343 O372 Y408 L440
T108 P160 I235 B292 S345 G435 O463 M486 L516
T186 P230 I288 B338 S384 G462 O490 Y520 L548
T72 P140 I180 B212 S260 G352 O375 Y465 M505
T96 P141 I180 B212 S272 G335 O360 Y452 M496
T80 P140 I180 B215 S262 G338 O365 Y387 M408
T154 P218 I248 S295 G375 O400 Y528 L556 M585
T84 P148 I180 S226 G302 O328 Y362 L378 M398
T63 P120 I142 S197 G268 O288 Y328 M346 L373
T70 P118 I150 B165 S217 G308 O330 Y356 U370
T158 P200 I237 S296 G374 O397 Y432 L447 R465
T88 P140 I172 S215 G308 Y350 M390
T80 P150 I170 S228 G350 O367 Y414 L440 M556
T157 P212 I238 S325 G452 O477 Y500 M597 R620
T70 P125 I148 S203 G310 O330 Y350 U365 R384
T80 P148 I178 S240 G365 O388 Y417 U440 R468
T86 P152 I184 S230 G312 O336 Y356 U378 R404
T72 P135 S185 G282 O310 Y347 L366 U388 R404
T92 P168 I192 S258 G368 O385 Y416 R438 W457
T96 P160 I180 S246 G340 O364 Y384 U402 W428
T94 P158 I182 S236 G335 O356 Y388 R400 L415
T84 P158 I182 S242 G354 O374 Y400 U412 R434
T84 P135 I165 S214 G318 O346 Y384 U408 R432
T100 P160 I180 S240 G350 O376 Y402 U424 R452
T76 P147 I172 S230 G354 Y376 L404 U426 R462
T100 P160 I186 S235 G322 O357 Y380 U404 R440
T98 P166 I190 S243 G354 O378 Y410 U438 R472
T80 P124 I152 S206 G300 Y315 U335 R356 L406
T80 P158 I172 S220 G312 O332 Y368 M390 R414
T95 P180 I202 S256 G342 O374 Y398 R412 W438
T80 P144 I163 S222 G328 O354 Y386 U406 R428
T100 P158 I186 S250 G354 O374 Y408 U433 R464
T88 P162 I190 S248 G334 O360 Y390 U410 R436
T80 P150 I165 S226 G332 O354 Y378 U410 R448
T74 P152 I172 S230 G323 O346 Y383 U420 R455
T146 P215 S271 G370 O386 Y408 L432 U457 R492
T77 P145 I158 S218 G300 O330 Y352 U378 R420
T70 P132 S188 G298 O314 Y336 L352 U378 R442
T85 P150 I175 S252 G330 O356 Y377 U400 R427
T80 P140 S185 G262 O283 Y308 M325 U358 R396
T102 P152 S218 G290 O317 Y345 M360 U380 R418
T84 P145 S203 G293 O316 Y344 M362 U382 R400
T77 P144 I164 S217 G314 O343 Y366 U390 R438
T126 P180 I207 S268 G368 O388 Y414 U438 R462
T92 P160 I180 S228 G316 O338 Y358 U380 R420
T113 P170 I188 S250 G325 O352 Y372 U405 R432
T114 P192 I212 S258 G374 O392 Y434 O467 Y488
T88 P168 I194 S262 G342 O364 Y374 L388 U414 R450
T128 P195 S250 G325 O345 Y378 U405 R440
T112 P192 I212 S246 G342 O356 Y376 U402 R422
T120 P200 I228 S276 G352 O372 Y410 U438 R464
T84 P150 I178 S234 G307 O330 Y344 U370 R397
T88 P153 B170 S218 G294 O312 Y328 U362 R400
T78 P150 I170 S222 G280 O305 Y323 U357 R388
T68 P137 I157 S198 G262 Y292 L335 U367 R410
T213 P293 S355 G414 O437 Y460 L488 U530 R560
T315 P405 I434 S494 G575 Y610 L646 U682 R748
T62 P108 S157 G220 O238 Y260 L286 U316 R350`.split('\n').map(line => {
    const out = [];
    let prev = 0;
    line.split(' ').forEach(part => {
        const v = +part.slice(1);
        if (part[0] === 'G') {
            out.push([portColors.G, prev + (v - prev) * 0.6], [portColors.W, v]);
        } else {
            out.push([portColors[part[0]], v]);
        }
        prev = v;
    });
    return out;
});

// SC, RU, US, CN, NL, total (tens of events)
const countryColors = ['#4050bf', '#57c17b', '#6f87d8', '#663db8', '#bc8f3d'];
const restColors = ['#406fbf', '#40aebf', '#40bfae', '#bf404f', '#8fbf40', '#b0bf40', '#bf40b4'];
const countries = `20 41 57 66 72 77|78 148 212 247 270 293|91 158 226 264 284 305|86 152 219 250 270 288|86 166 239 266 291 308
84 148 212 241 264 287|48 115 177 210 235 268|59 144 206 237 255 275|77 163 221 253 266 281|79 174 244 283 302 334
72 174 239 270 292 307|75 220 283 312 333 351|82 219 302 333 345 366|62 209 280 316 331 355|59 190 255 284 300 316
57 217 278 305 323 350|43 185 249 280 302 327|29 192 252 273 290 310|16 161 231 257 270 283|18 190 262 284 298 311
16 148 220 240 252 263|46 167 233 256 269 296|63 194 260 280 295 310|60 199 267 286 302 317|61 190 259 281 320 336
57 190 258 278 314 329|57 170 271 291 310 325|59 193 263 286 302 336|55 167 248 273 290 315|56 168 243 267 285 318
34 142 199 218 230 249|41 196 257 273 285 304|14 165 225 243 258 273|17 178 225 245 260 293|26 179 227 250 265 278
59 226 272 288 311 325|61 216 266 289 311 323|60 210 280 300 316 330|57 190 239 266 277 292|57 201 253 273 285 300
54 190 247 266 280 302|57 188 236 258 273 298|55 124 179 202 214 232|47 111 170 188 199 218|27 117 172 190 200 222
43 176 232 253 265 286|59 183 245 266 275 297|57 213 278 298 310 329|59 286 341 360 372 396|59 334 388 414 428 449
70 328 377 400 410 432|63 328 380 403 411 433|59 295 343 365 378 399|59 306 358 380 393 415|51 272 328 345 357 374
114 311 364 384 392 407|20 245 294 325 332 347|18 254 312 333 346 360|21 229 300 318 328 346|20 247 305 334 345 393
14 159 206 220 228 245`.split(/[|\n]/).map((row, i) => {
    const v = row.split(' ').map(n => n * 10);
    const out = countryColors.map((c, k) => [c, v[k]]);
    const rest = v[5] - v[4];
    const parts = Math.max(2, Math.round(rest / 50));
    for (let k = 1; k <= parts; k++) {
        out.push([restColors[k === 1 ? i % 2 : (i + k * 2) % 7], v[4] + rest * k / parts]);
    }
    return out;
});

// * fills up to the value with small sources
const ipColors = {
    p: '#8040bf', r: '#bf4062', t: '#40bfa8', y: '#b9bf40', i: '#4e40bf', o: '#bf5f40', b: '#4087bf',
    g: '#40bf46', m: '#bf40b4', l: '#73bf40', c: '#40a3bf', k: '#bf407f'
};
const small = 'tlpbyrmgcoirtblmgp';
const sources = `p25 *110|p90 g160 *370|p92 *360|p50 *295|p90 *330|p60 *200 r275 *358|*50 g180 *358|*275|p40 *285|g180 *250 t310 *445
*100 t180 *288|*282|*180 p400 *450 *515|*80 i180 *385|*310|*180 r310 *370 t420 *435|g90 *180 r300 p375 *553|y150 *230 r370 *455|r170 *220 l330 *480|*60 r220 *350 r430 *518
*110 r240 l420 *497|g130 *200 r300 *380 l500 *580|*90 l270 *380|*100 l230 *368|*130 l250 *470|*40 l160 *410 *468|*140 l260 t610 y655|*100 l220 p330 t450 i600 *630|*80 l210 *400 *465|*60 l175 *380 k570
*335|*100 i270 o500 c530|*297|*130 l430 m470|*298|*335|*300|*260 k485|*270 g322|*308
*160 i270 *385|g100 t210 *360|*335|*295|*120 r220 *345|*275|*285|*90 p190 i270 *380 r440 *545|c60 p210 i345 r470 m580 r700 y800 b980 c1148|t45 p210 i385 r475 m590 r700 y820 b1050 c1285
t50 p210 i380 r490 m610 r700 y800 b1030 c1250|p180 i320 r430 m530 r640 y750 b970 c1175 g1210|p150 i300 r410 m490 r570 y690 b910 c1120 m1185|t50 p210 i345 r440 m555 r640 y750 b960 c1180|t30 p220 i375 r480 m570 r680 y800 b1030 c1272|o220 p390 i555 r660 m790 r890 y1000 b1210 c1415 g2075|p165 i335 r450 m560 r670 y790 b980 c1190 o1245 b1285|t50 p170 i335 r445 m560 r690 y780 b970 c1185|p150 i300 r420 m530 r630 y735 b820 c1070 r1115 t1175|*30 p220 i365 r500 m620 r710 y820 c1040 l1287
*60 p160 i300 r430 r520 y620 c785`.split(/[|\n]/).map((row, i) => {
    const out = [];
    let prev = 0;
    row.split(' ').forEach(part => {
        const v = +part.slice(1);
        if (part[0] === '*') {
            const n = Math.max(1, Math.round((v - prev) / 26));
            for (let k = 1; k <= n; k++) {
                out.push([ipColors[small[(i * 5 + k * 7 + out.length) % small.length]], prev + (v - prev) * k / n]);
            }
        } else {
            out.push([ipColors[part[0]], v]);
        }
        prev = v;
    });
    return out;
});

const blocked = [['Russia', 87200], ['United States', 36700], ['Seychelles', 32200], ['China', 15050], ['Netherlands', 8940],
    ['United Kingdom', 2570], ['Singapore', 2040], ['Ukraine', 2040], ['Germany', 1510], ['Republic of Moldova', 1450]];

function histogram() {
    const el = document.getElementById('histogram');
    const w = el.clientWidth;
    const h = el.clientHeight;
    const left = 134;
    const right = w - 1;
    const top = 10;
    const bottom = h - 76;
    const step = (bottom - top) / blocked.length;
    let s = '';
    blocked.forEach(([name, count], i) => {
        const y = top + i * step;
        s += rect(left, y, (right - left) * count / 90000, step - 3, '#9ac58a');
        s += `<path class="axis" d="M${left - 6} ${Math.round(y + step / 2) - .5}h6"/>`;
        s += `<text class="end" x="${left - 9}" y="${y + step / 2 + 3}">${name}</text>`;
    });
    s += `<path class="axis" d="M${left - 6} ${top + .5}h6V${bottom}M${left - 6} ${bottom + .5}H${right}v5M${left} ${bottom}v5"/>`;
    for (let v = 20000; v <= 80000; v += 20000) {
        const x = left + (right - left) * v / 90000;
        s += `<path class="axis" d="M${x} ${bottom}v5"/>`;
        s += `<text class="end" transform="translate(${x + 3} ${bottom + 9}) rotate(-75)">${v.toLocaleString('en-US')}</text>`;
    }
    s += `<text class="axis-title" x="${(left + right) / 2}" y="${bottom + 61}">Count</text>`;
    s += `<text class="axis-title" transform="translate(10 ${(top + bottom) / 2}) rotate(-90)">Country</text>`;
    svg(el, w, h, s);
}

// slice end angles, clockwise from the top
const slices = [[70.8, '#40bfbc'], [115.6, '#7b40bf'], [155.6, '#bf4074'], [187.2, '#40bf75'], [216.5, '#40bf8b'],
    [238.9, '#b4bf40'], [258.8, '#4b40bf'], [277.6, '#bf4a40'], [293.7, '#bf6c40'], [309.7, '#406dbf'],
    [322.7, '#4094bf'], [334.5, '#55bf40'], [345.2, '#a940bf'], [353.2, '#bf40b2'], [360, '#40bf4b']];

function pie() {
    const el = document.getElementById('pie');
    const w = el.clientWidth;
    const h = el.clientHeight;
    const r = 99;
    const point = a => `${r * Math.sin(a * Math.PI / 180)} ${-r * Math.cos(a * Math.PI / 180)}`;
    let from = 0;
    let s = `<g transform="translate(${w / 2 - 2} ${h / 2})">`;
    slices.forEach(([to, color]) => {
        s += `<path class="slice" fill="${color}" d="M0 0L${point(from)}A${r} ${r} 0 0 1 ${point(to)}z"/>`;
        from = to;
    });
    svg(el, w, h, s + '</g>');
}

function draw() {
    histogram();
    pie();
    timeline('events', events.map(v => [['#ea6560', v]]), {
        left: 60, right: 1, max: 5000, tick: 1000, seam: 0,
        labels: [[8, '2021-05-13'], [20, '2021-05-19'], [32, '2021-05-25'], [44, '2021-05-31'], [54, '2021-06-05']]
    });
    timeline('ports', ports, {
        left: 52, right: 5, max: 800, tick: 200, seam: 0.2,
        labels: [[14, '2021-05-16'], [42, '2021-05-30']]
    });
    timeline('countries', countries, {
        left: 60, right: 5, max: 4500, tick: 1000, seam: 0,
        labels: [[14, '2021-05-16'], [42, '2021-05-30']]
    });
    timeline('sources', sources, {
        left: 60, right: 5, max: 2200, tick: 500, seam: 0.2,
        labels: [[4, '2021-05-11'], [12, '2021-05-15'], [20, '2021-05-19'], [28, '2021-05-23'], [36, '2021-05-27'],
            [44, '2021-05-31'], [50, '2021-06-03'], [58, '2021-06-07']]
    });
}

draw();
window.addEventListener('resize', draw);
```
